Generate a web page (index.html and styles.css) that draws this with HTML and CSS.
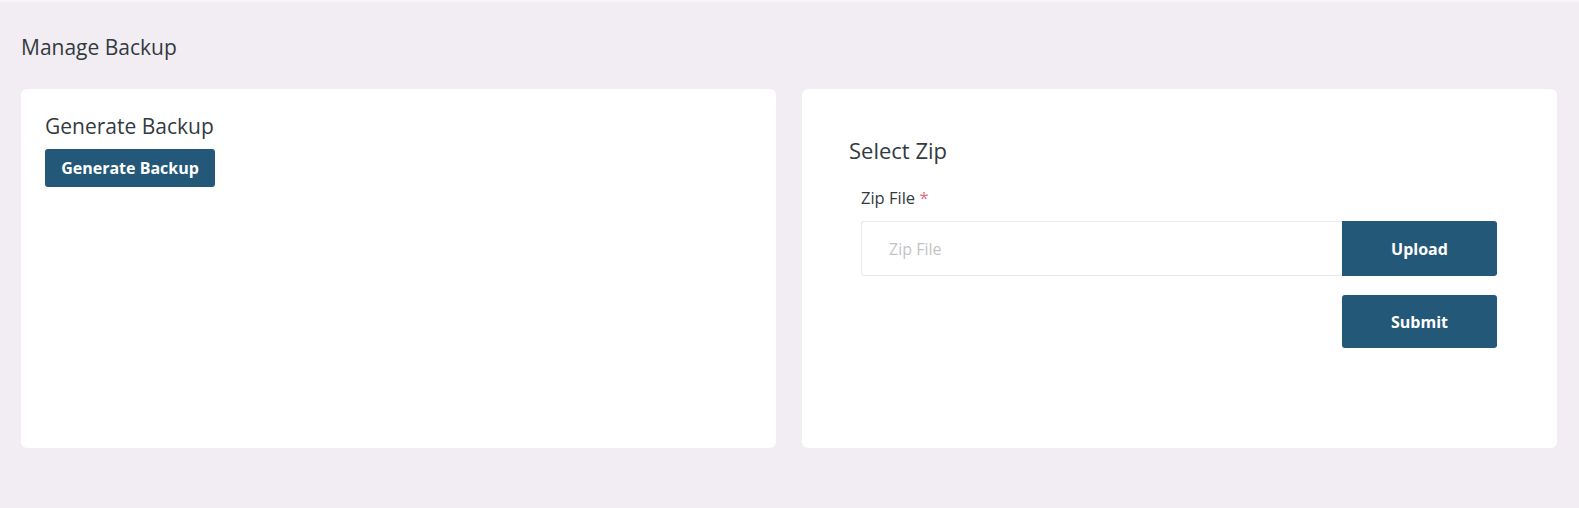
FILE: index.html
```html
<!DOCTYPE html>
<html lang="en">
<head>
<meta charset="utf-8">
<title>Manage Backup</title>
<link rel="stylesheet" href="styles.css">
</head>
<body>
<div class="topline"></div>
<main class="page">
  <h1 class="page-title">Manage Backup</h1>
  <div class="grid">
    <section class="card card-left">
      <h2 class="card-title">Generate Backup</h2>
      <button class="btn btn-gen" type="button">Generate Backup</button>
    </section>
    <section class="card card-right">
      <h2 class="card-title card-title-lg">Select Zip</h2>
      <div class="form">
        <label class="label">Zip File <span class="req">*</span></label>
        <div class="input-group">
          <input class="input" type="text" placeholder="Zip File">
          <button class="btn btn-side" type="button">Upload</button>
        </div>
        <div class="actions">
          <button class="btn btn-side btn-submit" type="button">Submit</button>
        </div>
      </div>
    </section>
  </div>
</main>
</body>
</html>
```

FILE: styles.css
```css
* { box-sizing: border-box; }
html, body { margin: 0; padding: 0; }
body {
  background: #f1edf3;
  font-family: "Open Sans", "Noto Sans", sans-serif;
  color: #333a40;
  height: 508px;
  overflow: hidden;
}
.topline { height: 2px; background: #f7f5f8; }
.page { padding: 0 22px 0 21px; }
.page-title {
  margin: 0;
  padding-top: 32px;
  font-size: 21px;
  line-height: 26px;
  font-weight: 500;
  color: #333a40;
}
.grid {
  display: grid;
  grid-template-columns: 1fr 1fr;
  gap: 26px;
  margin-top: 29px;
}
.card {
  background: #ffffff;
  border-radius: 6px;
  height: 359px;
}
.card-left { padding: 25px 24px; }
.card-right { padding: 48px 60px 0 47px; }
.card-title {
  margin: 0;
  font-size: 21px;
  line-height: 24px;
  font-weight: 500;
  color: #333a40;
}
.card-title-lg { font-size: 22px; line-height: 26px; }
.btn {
  border: 0;
  background: #245878;
  color: #ffffff;
  font-family: inherit;
  font-weight: 700;
  border-radius: 3px;
  cursor: pointer;
}
.btn-gen {
  margin-top: 11px;
  height: 38px;
  width: 170px;
  font-size: 16px;
  padding: 0;
}
.form { padding-left: 12px; margin-top: 24px; }
.label {
  display: block;
  font-size: 16.5px;
  line-height: 22px;
  color: #333a40;
}
.req { color: #e46a7c; }
.input-group {
  display: flex;
  margin-top: 12px;
  height: 55px;
}
.input {
  flex: 1;
  min-width: 0;
  height: 55px;
  border: 1px solid #e9e9ec;
  border-right: 0;
  border-radius: 3px 0 0 3px;
  padding: 0 27px;
  font-family: inherit;
  font-size: 16px;
  color: #333a40;
  outline: none;
}
.input::placeholder { color: #c3c3c7; }
.btn-side {
  width: 155px;
  font-size: 16px;
  height: 55px;
  padding: 0;
}
.input-group .btn-side { border-radius: 0 3px 3px 0; }
.actions {
  display: flex;
  justify-content: flex-end;
  margin-top: 19px;
}
.btn-submit { height: 53px; }
```
